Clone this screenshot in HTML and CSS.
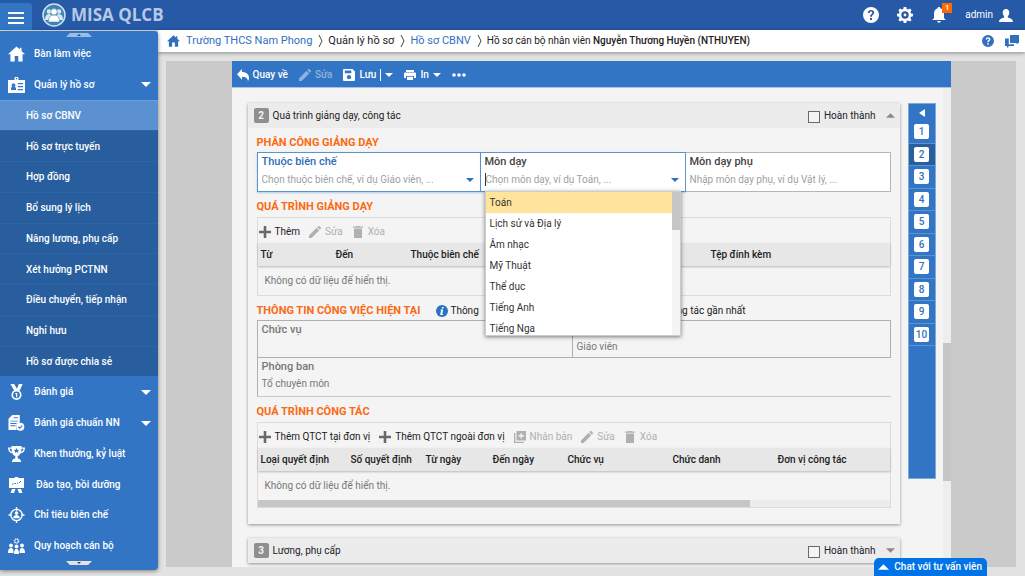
FILE: index.html
```html
<!DOCTYPE html>
<html lang="vi">
<head>
<meta charset="utf-8">
<title>MISA QLCB</title>
<link rel="stylesheet" href="styles.css">
</head>
<body>
<svg class="defs" aria-hidden="true">
  <symbol id="i-home" viewBox="0 0 16 14"><path d="M8 0 0 7.2h2.3V14h4V8.800h3.400V14h4V7.200H16L12.700 4.200V1h-1.600v1.800z"/></symbol>
  <symbol id="i-plus" viewBox="0 0 12 12"><path d="M4.700 0h2.600v4.700H12v2.600H7.300V12H4.700V7.300H0V4.700h4.700z"/></symbol>
  <symbol id="i-pencil" viewBox="0 0 12 12"><path d="M0 12v-2.600L7.600 1.800l2.600 2.600L2.600 12zM8.300 1.100 9.200.2a.8.8 0 0 1 1.200 0l1.400 1.400a.8.8 0 0 1 0 1.200l-.9.9z"/></symbol>
  <symbol id="i-trash" viewBox="0 0 10 12"><path d="M0 .5h3L3.500 0h3l.5.500h3v1.200H0zM1 2.600h8V12H1z"/></symbol>
  <symbol id="i-down" viewBox="0 0 8 4"><path d="M0 0h8L4 4z"/></symbol>
  <symbol id="i-up" viewBox="0 0 8 4"><path d="M0 4h8L4 0z"/></symbol>
  <symbol id="i-help" viewBox="0 0 16 16"><path fill-rule="evenodd" d="M8 0a8 8 0 1 1 0 16A8 8 0 0 1 8 0zM4.800 6h1.900c0-1 .5-1.500 1.300-1.500s1.300.5 1.300 1.200C9.300 7 7.100 7 7.100 9.700h1.800c0-1.800 2.300-2.100 2.300-4.100C11.200 4 9.900 3 8 3S4.800 4.200 4.800 6zM7 11v2h2v-2z"/></symbol>
</svg>

<header class="top">
  <button class="menu-btn" aria-label="Menu"><span></span><span></span><span></span></button>
  <a class="brand" href="#">
    <svg class="brand-logo" viewBox="0 0 24 24"><circle cx="12" cy="12" r="11" fill="#3d86b4" stroke="#cfe0f0" stroke-width="1.500"/><g fill="#dbe8f4"><circle cx="7" cy="8.500" r="2.300"/><circle cx="17" cy="8.500" r="2.300"/><path d="M3 17c0-4 1.500-6 4-6s4 2 4 6zM13 17c0-4 1.500-6 4-6s4 2 4 6z"/></g><g fill="#fff" stroke="#3d86b4" stroke-width=".6"><path d="M6.500 19c0-5 2-7 5.500-7s5.500 2 5.500 7z"/><circle cx="12" cy="8.800" r="3.200"/></g></svg>
    <span>MISA QLCB</span>
  </a>
  <nav class="top-actions">
    <button aria-label="Trợ giúp"><svg class="s16"><use href="#i-help"/></svg></button>
    <button aria-label="Thiết lập"><svg class="s16" viewBox="0 0 16 16"><path fill-rule="evenodd" d="M6.700 0h2.600l.4 2 1.500.6L13 1.500 14.600 3.200l-1.200 1.700.6 1.500 2 .4v2.500l-2 .4-.6 1.500 1.200 1.700-1.700 1.700-1.700-1.200-1.500.6-.4 2H6.700l-.4-2-1.500-.6-1.700 1.200L1.400 12.900l1.200-1.700L2 9.700l-2-.4V6.800l2-.4.6-1.500L1.400 3.200 3.100 1.500l1.700 1.100L6.300 2zM8 4.300a3.700 3.700 0 1 0 0 7.400 3.700 3.700 0 0 0 0-7.400z"/><circle cx="8" cy="8" r="1.400"/></svg></button>
    <button class="bell" aria-label="Thông báo"><svg class="s16" viewBox="0 0 16 16"><path d="M8 0c.8 0 1.300.5 1.300 1.300C11.800 2 13 4 13 6.500V11l1.800 2H1.200L3 11V6.500C3 4 4.200 2 6.700 1.300 6.700.5 7.200 0 8 0zM6.200 14h3.600a1.800 1.800 0 0 1-3.600 0z"/></svg><span class="badge">1</span></button>
    <button class="user">admin <svg class="s14" viewBox="0 0 14 13"><path d="M7 0c2 0 3.300 1.400 3.300 3.600 0 1.600-.7 3-1.500 3.800v1.200C11.500 9.300 14 10.500 14 13H0c0-2.500 2.500-3.700 5.200-4.400V7.400C4.400 6.600 3.700 5.200 3.700 3.600 3.700 1.400 5 0 7 0z"/></svg></button>
  </nav>
</header>

<div class="body">
  <aside class="side">
    <button class="scroller scroller-up" aria-label="Cuộn lên"><svg viewBox="0 0 8 4"><use href="#i-up"/></svg></button>
    <nav class="side-nav">
      <a class="item" href="#"><svg class="s17"><use href="#i-home"/></svg>Bàn làm việc</a>
      <a class="item" href="#"><svg class="s17" viewBox="0 0 17 16"><path fill-rule="evenodd" d="M6.500 3V1.500a2 2 0 0 1 4 0V3H17v13H0V3zM8.500.8a.8.8 0 0 0 0 1.600.8.800 0 0 0 0-1.600zM3 11.500v1.500h5v-1.500c0-1-.8-1.600-1.500-1.700a1.800 1.800 0 1 0-2 0c-.7.1-1.500.7-1.500 1.700zM9.800 6v1.200H15V6zM9.800 9v1.200H15V9zM9.800 12v1.200H15V12z"/></svg>Quản lý hồ sơ<svg class="arrow"><use href="#i-down"/></svg></a>
      <a class="item sub current" href="#">Hồ sơ CBNV</a>
      <a class="item sub" href="#">Hồ sơ trực tuyến</a>
      <a class="item sub" href="#">Hợp đồng</a>
      <a class="item sub" href="#">Bổ sung lý lịch</a>
      <a class="item sub" href="#">Nâng lương, phụ cấp</a>
      <a class="item sub" href="#">Xét hưởng PCTNN</a>
      <a class="item sub" href="#">Điều chuyển, tiếp nhận</a>
      <a class="item sub" href="#">Nghỉ hưu</a>
      <a class="item sub" href="#">Hồ sơ được chia sẻ</a>
      <a class="item" href="#"><svg class="s17" viewBox="0 0 17 17"><path d="M2 0h4l3 5 2-5h4l-3 7H6z"/><circle cx="8.500" cy="11.500" r="4.500" fill="none" stroke="#fff" stroke-width="1.800"/><path d="M7.300 9.500h2v4.500H8V11h-.7z"/></svg>Đánh giá<svg class="arrow"><use href="#i-down"/></svg></a>
      <a class="item" href="#"><svg class="s17" viewBox="0 0 17 17"><path fill-rule="evenodd" d="M4 0h8v8a5 5 0 0 0-3 8H0V4zM2 6v1h8V6zM2 8.500v1h6.500v-1zM2 11v1h5.500v-1zM5.500 2.500v1H10v-1z"/><circle cx="12.500" cy="12.500" r="4.300"/><path d="m10.500 12.500 1.500 1.500 2.700-2.700" fill="none" stroke="#3275c4" stroke-width="1.200"/></svg>Đánh giá chuẩn NN<svg class="arrow"><use href="#i-down"/></svg></a>
      <a class="item" href="#"><svg class="s17" viewBox="0 0 17 16"><path fill-rule="evenodd" d="M3.500 0h10v1.500H17C17 5 15.500 7 12.500 7.500 11.800 9 10.800 9.800 9.700 10v2.500c2 .2 3.300 1.500 3.500 3.500H3.800c.2-2 1.500-3.300 3.500-3.500V10C6.200 9.800 5.200 9 4.500 7.500 1.500 7 0 5 0 1.500h3.500zM1.500 2.700c.2 1.500 1 2.700 2.300 3.200L3.600 2.700zM13.400 2.700l-.2 3.200c1.300-.5 2.100-1.700 2.300-3.200zM8.500 2l-.8 1.700-1.900.2 1.400 1.300L6.800 7l1.700-.9 1.700.9-.4-1.800 1.400-1.300-1.900-.2z"/></svg>Khen thưởng, kỷ luật</a>
      <a class="item" href="#"><svg class="s17" viewBox="0 0 17 16"><path d="M1 1h5.500L7 0h3l.5 1H16v10H1zM4 12h3.500L6 16H2.500zM9.500 12H13l1.500 4H11z"/><path d="M4 7h1.500M6.500 6.500H8M9 6h1M11 6l2-2" fill="none" stroke="#3275c4"/></svg><span class="pad">Đào tạo, bồi dưỡng</span></a>
      <a class="item" href="#"><svg class="s17" viewBox="0 0 17 17"><circle cx="8.500" cy="8.500" r="6" fill="none" stroke="#fff" stroke-width="1.500"/><path d="M7.800 0h1.400v4H7.800zM7.800 14h1.400v3H7.800zM0 7.800h3v1.400H0zM14 7.800h3v1.400h-3zM5 12c0-2.500 1.500-3.500 3.500-3.500S12 9.500 12 12z"/><circle cx="8.500" cy="6.500" r="1.900"/></svg>Chỉ tiêu biên chế</a>
      <a class="item" href="#"><svg class="s17" viewBox="0 0 17 16"><circle cx="8.500" cy="3" r="2" fill="none" stroke="#fff" stroke-width="1.600" stroke-dasharray="1.200 .6"/><circle cx="3" cy="7.500" r="1.900"/><circle cx="8.500" cy="8.500" r="1.900"/><circle cx="14" cy="7.500" r="1.900"/><path d="M0 15c0-3.500 1-5 3-5s2.500 1.500 2.500 5zM6 16c0-3.500.7-5 2.500-5s2.500 1.500 2.500 5zM11.500 15c0-3.500.5-5 2.500-5s3 1.500 3 5z"/></svg>Quy hoạch cán bộ</a>
    </nav>
    <button class="scroller scroller-down" aria-label="Cuộn xuống"><svg viewBox="0 0 8 4"><use href="#i-down"/></svg></button>
  </aside>

  <main class="main">
    <nav class="crumbs">
      <a class="crumb-home" href="#" aria-label="Trang chủ"><svg class="s13"><use href="#i-home"/></svg></a>
      <a href="#">Trường THCS Nam Phong</a>
      <svg class="sep" viewBox="0 0 5 12"><path d="m1 0 3 6-3 6"/></svg>
      <span>Quản lý hồ sơ</span>
      <svg class="sep" viewBox="0 0 5 12"><path d="m1 0 3 6-3 6"/></svg>
      <a href="#">Hồ sơ CBNV</a>
      <svg class="sep" viewBox="0 0 5 12"><path d="m1 0 3 6-3 6"/></svg>
      <span class="crumb-now">Hồ sơ cán bộ nhân viên <b>Nguyễn Thương Huyền (NTHUYEN)</b></span>
      <span class="crumb-tools">
        <button aria-label="Hướng dẫn"><svg class="s12"><use href="#i-help"/></svg></button>
        <button aria-label="Trao đổi"><svg class="s14" viewBox="0 0 14 13"><path d="M5 0h9v8h-1.500v1.500L11 8H5zM0 3.500h3.800V9.200H9v1.800H4L2 13v-2H0z"/></svg></button>
      </span>
    </nav>

    <div class="stage">
      <section class="page">
        <div class="toolbar">
          <button><svg class="s12" viewBox="0 0 12 12"><path d="M5 0v3c4.500 0 7 2.500 7 6 0 1.200-.4 2.200-1 3-.3-2.800-2.200-4.300-6-4.300v3L0 5.200z"/></svg>Quay về</button>
          <button disabled><svg class="s12"><use href="#i-pencil"/></svg>Sửa</button>
          <button class="save"><svg class="s12" viewBox="0 0 12 12"><path fill-rule="evenodd" d="M1 0h8.500L12 2.500V11a1 1 0 0 1-1 1H1a1 1 0 0 1-1-1V1a1 1 0 0 1 1-1zM1.800 1.500v2.700h6.500V1.500zM6 6a2.100 2.100 0 1 0 0 4.300A2.100 2.100 0 0 0 6 6z"/></svg>Lưu</button>
          <button class="split" aria-label="Tùy chọn lưu"><svg class="arrow"><use href="#i-down"/></svg></button>
          <button class="print"><svg class="s12" viewBox="0 0 12 12"><path fill-rule="evenodd" d="M2 1h8v2H2zM1 3.600h10a1 1 0 0 1 1 1V9h-2V7H2v2H0V4.600a1 1 0 0 1 1-1zM3 7.800h6V11H3z"/></svg>In<svg class="arrow"><use href="#i-down"/></svg></button>
          <button aria-label="Thêm"><svg class="dots" viewBox="0 0 14 4"><circle cx="2" cy="2" r="1.800"/><circle cx="7" cy="2" r="1.800"/><circle cx="12" cy="2" r="1.800"/></svg></button>
        </div>

        <div class="scroll">
          <div class="cards">
            <section class="card">
              <header class="card-head">
                <span class="num">2</span><h2>Quá trình giảng dạy, công tác</h2>
                <label class="done"><input type="checkbox">Hoàn thành</label>
                <button class="fold" aria-label="Thu gọn"><svg><use href="#i-up"/></svg></button>
              </header>
              <div class="card-body">
                <h3>PHÂN CÔNG GIẢNG DẠY</h3>
                <div class="fields">
                  <div class="field active">
                    <label class="blue" for="f1">Thuộc biên chế</label>
                    <div class="combo"><input id="f1" placeholder="Chọn thuộc biên chế, ví dụ Giáo viên, ..."><svg class="arrow"><use href="#i-down"/></svg></div>
                  </div>
                  <div class="field active">
                    <label for="f2">Môn dạy</label>
                    <div class="combo"><input id="f2" class="caret" placeholder="Chọn môn dạy, ví dụ Toán, ..."><svg class="arrow"><use href="#i-down"/></svg></div>
                    <div class="menu">
                      <ul role="listbox" aria-label="Môn dạy">
                        <li role="option" aria-selected="true" class="on">Toán</li>
                        <li role="option">Lịch sử và Địa lý</li>
                        <li role="option">Âm nhạc</li>
                        <li role="option">Mỹ Thuật</li>
                        <li role="option">Thể dục</li>
                        <li role="option">Tiếng Anh</li>
                        <li role="option">Tiếng Nga</li>
                      </ul>
                      <div class="menu-bar"><span></span></div>
                    </div>
                  </div>
                  <div class="field">
                    <label for="f3">Môn dạy phụ</label>
                    <div class="combo"><input id="f3" placeholder="Nhập môn dạy phụ, ví dụ Vật lý, ..."></div>
                  </div>
                </div>

                <h3>QUÁ TRÌNH GIẢNG DẠY</h3>
                <div class="grid">
                  <div class="grid-tools">
                    <button><svg class="s12"><use href="#i-plus"/></svg>Thêm</button>
                    <button disabled><svg class="s12"><use href="#i-pencil"/></svg>Sửa</button>
                    <button disabled><svg class="s12"><use href="#i-trash"/></svg>Xóa</button>
                  </div>
                  <table>
                    <colgroup><col class="c75"><col class="c75"><col class="c300"><col></colgroup>
                    <thead><tr><th>Từ</th><th>Đến</th><th>Thuộc biên chế</th><th>Tệp đính kèm</th></tr></thead>
                    <tbody><tr><td colspan="4">Không có dữ liệu để hiển thị.</td></tr></tbody>
                  </table>
                </div>

                <div class="title-row">
                  <h3>THÔNG TIN CÔNG VIỆC HIỆN TẠI</h3>
                  <p class="info"><svg class="s12" viewBox="0 0 12 12"><circle cx="6" cy="6" r="6" fill="#2a72c4"/><path fill="#fff" d="M6 2h1.700l-.3 1.500H5.700zM4.700 4.500h2.500L6.300 9h.8l-.2.900H4.200L5 5.400h-.6z"/></svg><span>Thông</span><span class="info-end">công tác gần nhất</span></p>
                </div>
                <dl class="facts">
                  <div class="fact boxed"><dt>Chức vụ</dt><dd></dd></div>
                  <div class="fact boxed"><dt></dt><dd>Giáo viên</dd></div>
                  <div class="fact wide"><dt>Phòng ban</dt><dd>Tổ chuyên môn</dd></div>
                </dl>

                <h3>QUÁ TRÌNH CÔNG TÁC</h3>
                <div class="grid">
                  <div class="grid-tools">
                    <button><svg class="s12"><use href="#i-plus"/></svg>Thêm QTCT tại đơn vị</button>
                    <button><svg class="s12"><use href="#i-plus"/></svg>Thêm QTCT ngoài đơn vị</button>
                    <button disabled><svg class="s12" viewBox="0 0 12 12"><path fill-rule="evenodd" d="M2.500 0H12v9.500H2.500zM6.600 2v2.100H4.500v1.300h2.100v2.100h1.300V5.400H10V4.100H7.900V2zM0 2h1.300v8.700H10V12H0z"/></svg>Nhân bản</button>
                    <button disabled><svg class="s12"><use href="#i-pencil"/></svg>Sửa</button>
                    <button disabled><svg class="s12"><use href="#i-trash"/></svg>Xóa</button>
                  </div>
                  <table>
                    <colgroup><col class="c90"><col class="c75"><col class="c67"><col class="c75"><col class="c105"><col class="c105"><col></colgroup>
                    <thead><tr><th>Loại quyết định</th><th>Số quyết định</th><th>Từ ngày</th><th>Đến ngày</th><th>Chức vụ</th><th>Chức danh</th><th>Đơn vị công tác</th></tr></thead>
                    <tbody><tr><td colspan="7">Không có dữ liệu để hiển thị.</td></tr></tbody>
                  </table>
                  <div class="hbar"><span></span></div>
                </div>
              </div>
            </section>

            <section class="card">
              <header class="card-head">
                <span class="num">3</span><h2>Lương, phụ cấp</h2>
                <label class="done"><input type="checkbox">Hoàn thành</label>
                <button class="fold" aria-label="Mở rộng"><svg><use href="#i-down"/></svg></button>
              </header>
            </section>
          </div>

          <nav class="steps">
            <button class="steps-toggle" aria-label="Mở rộng mục lục"><svg viewBox="0 0 6 8"><path d="M6 0v8L0 4z"/></svg></button>
            <ol>
              <li><a href="#">1</a></li><li class="now"><a href="#">2</a></li><li><a href="#">3</a></li><li><a href="#">4</a></li><li><a href="#">5</a></li><li><a href="#">6</a></li><li><a href="#">7</a></li><li><a href="#">8</a></li><li><a href="#">9</a></li><li><a href="#">10</a></li>
            </ol>
          </nav>
          <div class="vbar"><span></span></div>
        </div>
      </section>
    </div>
  </main>
</div>

<button class="chat"><svg viewBox="0 0 12 6"><path d="M0 6h12L6 0z"/></svg>Chat với tư vấn viên</button>
</body>
</html>
```
FILE: styles.css
```css
* { box-sizing: border-box; }

body {
  margin: 0;
  height: 100vh;
  display: flex;
  flex-direction: column;
  overflow: hidden;
  background: #e2e2e2;
  color: #222;
  font: 10px/12px Roboto, "Liberation Sans", sans-serif;
}

button {
  display: flex;
  align-items: center;
  margin: 0;
  padding: 0;
  border: 0;
  background: none;
  color: inherit;
  font: inherit;
}

a { color: inherit; text-decoration: none; }
svg { flex: none; fill: currentColor; }
h2, h3, p, ol, ul, dl, dd { margin: 0; padding: 0; }
ol, ul { list-style: none; }

.defs { position: absolute; width: 0; height: 0; }
.s12 { width: 12px; height: 12px; }
.s13 { width: 13px; height: 12px; }
.s14 { width: 14px; height: 13px; }
.s16 { width: 16px; height: 16px; }
.s17 { width: 17px; height: 16px; }
.arrow { width: 8px; height: 4px; }

/* Top bar */
.top {
  display: flex;
  align-items: center;
  flex: none;
  height: 30px;
  background: #2659a6;
  color: #fff;
}
.menu-btn {
  align-self: flex-end;
  flex-direction: column;
  justify-content: center;
  gap: 3px;
  width: 32px;
  height: 27px;
  padding-top: 2px;
  border-radius: 0 3px 0 0;
  background: #3275c4;
}
.menu-btn span { width: 16px; height: 2px; background: #fff; }
.brand {
  display: flex;
  align-items: center;
  gap: 5px;
  margin-left: 10px;
  color: #b7c8e5;
  font: 700 17px/24px "Open Sans", Roboto, sans-serif;
}
.brand-logo { width: 24px; height: 24px; }
.top-actions {
  display: flex;
  align-items: center;
  gap: 18px;
  margin-left: auto;
  padding-right: 12px;
}
.bell { position: relative; }
.badge {
  position: absolute;
  top: -4px;
  right: -5px;
  width: 10px;
  height: 10px;
  background: #ff6a00;
  font: 500 8px/10px Roboto, sans-serif;
  text-align: center;
}
.user { gap: 6px; }

.body { display: flex; flex: 1; min-height: 0; }

/* Sidebar */
.side {
  display: flex;
  flex-direction: column;
  flex: none;
  width: 158px;
  margin: 1px 0 6px;
  border-radius: 0 4px 4px 0;
  background: #3275c4;
  box-shadow: 0 1px 4px rgba(0, 0, 0, .45);
  color: #fff;
  z-index: 2;
}
.scroller {
  align-self: center;
  justify-content: center;
  flex: none;
  width: 26px;
  height: 4px;
  background: #9dbde3;
  color: #2c4a70;
}
.scroller svg { width: 4px; height: 2px; }
.scroller-up { margin: 2px 0 1px; clip-path: polygon(15% 0, 85% 0, 100% 100%, 0 100%); }
.scroller-down { margin-bottom: 5px; background: #e2e2e2; clip-path: polygon(0 0, 100% 0, 85% 100%, 15% 100%); }
.side-nav {
  display: grid;
  grid-auto-rows: 1fr;
  flex: 1;
  min-height: 0;
}
.item {
  display: flex;
  align-items: center;
  gap: 9px;
  padding: 1px 8px 0;
  font-weight: 500;
}
.item .arrow { width: 10px; height: 5px; margin: 0 -1px 0 auto; }
.pad { padding-left: 2px; }
.sub {
  padding-left: 26px;
  background: #285e9e;
  border-top: 1px solid #2b64a8;
}
.sub.current { background: #5b91d0; border-color: #6b9cd5; }

/* Breadcrumb */
.main { display: flex; flex-direction: column; flex: 1; min-width: 0; }
.crumbs {
  display: flex;
  align-items: center;
  flex: none;
  height: 22px;
  padding: 0 6px 0 9px;
  background: #fff;
  box-shadow: 0 1px 4px rgba(0, 0, 0, .4);
  font-size: 11px;
}
.crumbs a, .crumb-tools { color: #3270bd; }
.crumb-home { display: flex; margin-right: 6px; }
.sep { width: 5px; height: 12px; margin: 0 5px 0 6px; fill: none; stroke: #444; }
.crumb-now { font-size: 10px; }
.crumb-now b { font-weight: 500; }
.crumb-tools { display: flex; align-items: center; gap: 11px; margin-left: auto; }

/* Stage and page */
.stage {
  display: flex;
  justify-content: center;
  flex: 1;
  min-height: 0;
  margin: 9px 9px 9px 8px;
  background: #cacaca;
}
.page {
  display: flex;
  flex-direction: column;
  width: 100%;
  max-width: 719px;
  background: #f4f4f4;
}
.toolbar {
  display: flex;
  align-items: center;
  flex: none;
  gap: 11px;
  height: 27px;
  padding: 2px 5px 0;
  border-bottom: 1px solid #a8c3e2;
  background: #3275c4;
  color: #fff;
  font-weight: 500;
}
.toolbar button { gap: 4px; }
.toolbar button:disabled { color: #8fb3de; }
.toolbar .split { height: 12px; margin-left: -7px; padding-left: 4px; border-left: 1px solid #fff; }
.dots { width: 14px; height: 4px; }

.scroll { display: flex; flex: 1; min-height: 0; overflow: hidden; padding-left: 16px; }
.cards { flex: 1; min-width: 0; padding-top: 15px; }
.card { margin-bottom: 14px; background: #f4f4f4; box-shadow: 0 1px 3px rgba(0, 0, 0, .4); }
.card-head {
  display: flex;
  align-items: center;
  height: 25px;
  padding: 0 5px 0 6px;
  background: #ececec;
}
.card-head h2 { font-size: 10px; font-weight: 400; }
.num {
  width: 15px;
  margin-right: 4px;
  border-radius: 2px;
  background: #8f8f8f;
  color: #f4f4f4;
  font-weight: 700;
  line-height: 15px;
  text-align: center;
}
.done { display: flex; align-items: center; gap: 4px; height: 14px; margin-left: auto; line-height: 10px; }
.done input {
  appearance: none;
  width: 12px;
  height: 12px;
  margin: 3px 0 0;
  border: 1px solid #6a6a6a;
  background: #f4f4f4;
}
.fold { margin-left: 10px; color: #948682; }
.fold svg { width: 9px; height: 5px; }

.card-body { padding: 6px 9px 16px; }
h3 { color: #fb6a12; font-size: 11px; font-weight: 700; line-height: 18px; }

/* Entry fields */
.fields { display: grid; grid-template-columns: 224fr 205fr 205fr; margin-bottom: 6px; }
.field {
  position: relative;
  height: 40px;
  padding: 2px 4px;
  border: 1px solid #b5b5b5;
  border-left: 0;
  background: #fff;
}
.field.active { border-color: #5b92d0; box-shadow: 0 1px 2px rgba(50, 117, 196, .35); }
.field:first-child { border-left: 1px solid #5b92d0; }
.field label { display: block; color: #444; font-size: 11px; font-weight: 500; line-height: 14px; }
.field .blue { color: #2f6db8; }
.combo { display: flex; align-items: center; margin-top: 4px; color: #2a72c4; }
.combo input {
  flex: 1;
  min-width: 0;
  height: 13px;
  padding: 0;
  border: 0;
  outline: 0;
  background: none;
  color: #333;
  font: inherit;
}
.combo .arrow { margin-right: 2px; }
.combo .caret { border-left: 1px solid #333; }
input::placeholder { color: #a0a0a0; opacity: 1; }

.menu {
  position: absolute;
  top: 38px;
  left: 4px;
  right: 4px;
  display: flex;
  height: 145px;
  border: 1px solid #ccc;
  background: #fff;
  box-shadow: 0 1px 4px rgba(0, 0, 0, .5);
  overflow: hidden;
  z-index: 1;
}
.menu ul { flex: 1; }
.menu li { padding-left: 4px; color: #333; line-height: 21px; }
.menu .on { background: #ffe49b; }
.menu-bar { width: 8px; background: #f4f4f4; }
.menu-bar span { display: block; height: 38px; background: #c6c6c6; }

/* Data grids */
.grid { margin: 1px 0 6px; border: 1px solid #dcdcdc; }
.card-body > .grid:last-child { margin-bottom: 0; }
.grid-tools { display: flex; align-items: center; gap: 9px; height: 25px; padding: 2px 2px 0 1px; }
.grid-tools button { gap: 4px; }
.grid-tools svg { color: #6a6a6a; }
.grid-tools button:disabled, .grid-tools button:disabled svg { color: #b0b0b0; }
table { width: 100%; border-collapse: collapse; table-layout: fixed; }
thead { background: #e7e7e7; box-shadow: 0 1px 2px rgba(0, 0, 0, .25); }
th { height: 23px; padding: 0 3px; font-weight: 500; text-align: left; white-space: nowrap; }
td { height: 29px; padding: 0 7px; color: #777; }
.c67 { width: 67px; }
.c75 { width: 75px; }
.c90 { width: 90px; }
.c105 { width: 105px; }
.c300 { width: 300px; }
.hbar { height: 7px; background: #ececec; }
.hbar span { display: block; width: 78%; height: 100%; background: #c6c6c6; }

/* Current job */
.title-row { display: flex; align-items: center; gap: 16px; }
.info { display: flex; align-items: center; gap: 2px; width: 309px; white-space: nowrap; }
.info-end { margin-left: auto; }
.facts { display: grid; grid-template-columns: 315fr 319fr; margin-bottom: 6px; }
.fact { height: 38px; padding: 2px 4px; border-left: 1px solid #b0b0b0; color: #777; }
.fact dt { height: 14px; font-size: 11px; font-weight: 500; line-height: 14px; }
.fact dd { margin-top: 4px; }
.boxed { border-top: 1px solid #b0b0b0; border-bottom: 1px solid #b0b0b0; }
.boxed + .boxed { border-right: 1px solid #b0b0b0; }
.wide { grid-column: 1 / -1; height: 39px; border-bottom: 1px solid #c8c8c8; }

/* Section index */
.steps {
  flex: none;
  width: 28px;
  height: 376px;
  margin: 15px 7px 0 8px;
  border: 1px solid #7fa9da;
  background: #3275c4;
  color: #fff;
}
.steps-toggle { justify-content: center; width: 100%; height: 17px; }
.steps-toggle svg { width: 6px; height: 8px; }
.steps ol { display: grid; grid-auto-rows: 1fr; height: 225px; }
.steps li { display: flex; align-items: center; justify-content: center; border-bottom: 1px solid #5b92d0; }
.steps .now { background: #285e9e; }
.steps a {
  width: 15px;
  border-radius: 2px;
  background: #fff;
  color: #3270bd;
  font-weight: 500;
  line-height: 15px;
  text-align: center;
}
.vbar { display: flex; flex-direction: column; justify-content: flex-end; width: 8px; padding-bottom: 86px; background: #eee; }
.vbar span { height: 138px; background: #c6c6c6; }

.chat {
  position: fixed;
  right: 38px;
  bottom: 0;
  gap: 5px;
  height: 18px;
  padding: 0 5px 0 4px;
  border-radius: 5px 5px 0 0;
  background: #0073e6;
  color: #fff;
  font-weight: 500;
  z-index: 3;
}
.chat svg { width: 11px; height: 6px; }
```
